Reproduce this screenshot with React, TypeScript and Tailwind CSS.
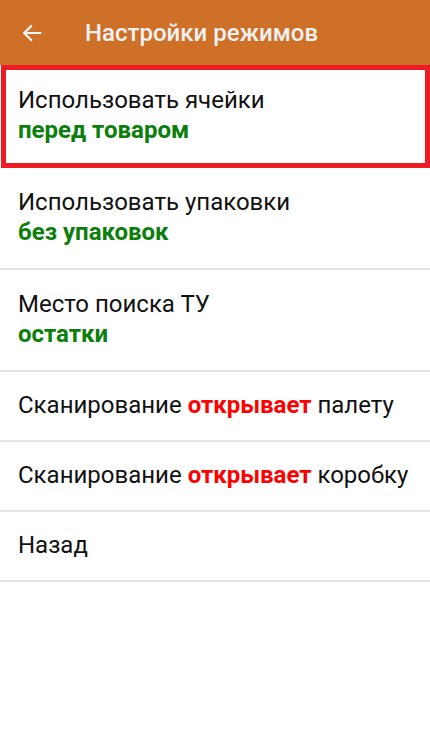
import { ReactNode } from "react";

interface RowProps {
  children: ReactNode;
  value?: string;
}

function Row({ children, value }: RowProps) {
  return (
    <div
      className={`border-b-2 border-[#e3e3e3] pl-[18px] pr-2 ${
        value ? "pt-[19px] pb-[21px]" : "pt-[18px] pb-[20px]"
      }`}
    >
      <div className="text-[24px] leading-[30px] text-[#111] whitespace-nowrap">
        {children}
      </div>
      {value && (
        <div className="text-[24px] leading-[30px] font-bold text-[#0a7f0a]">
          {value}
        </div>
      )}
    </div>
  );
}

export default function App() {
  return (
    <div className="w-[430px] h-[738px] bg-white font-['Roboto',sans-serif]">
      {/* Toolbar */}
      <div className="h-[65px] bg-[#ce7028] flex items-center">
        <svg
          width="22"
          height="22"
          viewBox="0 0 24 24"
          className="ml-[21px]"
          fill="none"
          stroke="#f4f4f4"
          strokeWidth="2.4"
          strokeLinecap="square"
        >
          <path d="M21 12H4M11 4.5 3.5 12l7.5 7.5" />
        </svg>
        <h1 className="ml-[42px] text-[24px] font-medium text-[#f1f1f1]">
          Настройки режимов
        </h1>
      </div>

      {/* Highlighted first item */}
      <div className="ml-px h-[103px] border-[5px] border-[#ed1c24] pl-[12px] pt-[15px]">
        <div className="text-[24px] leading-[30px] text-[#111]">
          Использовать ячейки
        </div>
        <div className="text-[24px] leading-[30px] font-bold text-[#0a7f0a]">
          перед товаром
        </div>
      </div>

      <Row value="без упаковок">Использовать упаковки</Row>
      <Row value="остатки">Место поиска ТУ</Row>
      <Row>
        Сканирование <span className="font-bold text-[#ff0000]">открывает</span>{" "}
        палету
      </Row>
      <Row>
        Сканирование <span className="font-bold text-[#ff0000]">открывает</span>{" "}
        коробку
      </Row>
      <Row>Назад</Row>
    </div>
  );
}
